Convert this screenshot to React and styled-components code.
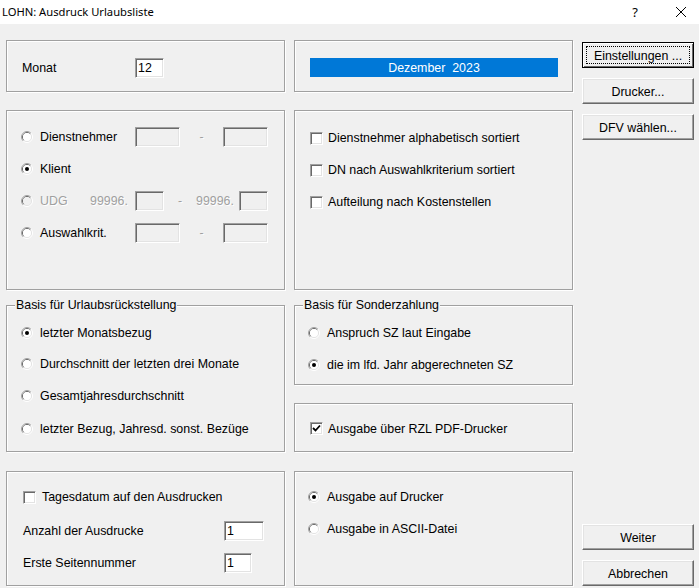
import React from 'react';
import styled, { createGlobalStyle, css } from 'styled-components';

const GlobalStyle = createGlobalStyle`
  html, body {
    margin: 0;
    padding: 0;
    background: #f0f0f0;
  }
  body {
    font-family: 'Liberation Sans', Arial, sans-serif;
    font-size: 12.4px;
    color: #000;
  }
`;

const Window = styled.div`
  width: 699px;
  height: 588px;
  background: #f0f0f0;
  display: flex;
  flex-direction: column;
  overflow: hidden;
`;

const TitleBar = styled.div`
  height: 24px;
  background: #fff;
  display: flex;
  align-items: center;
  padding-left: 2px;
  box-sizing: border-box;
`;

const Title = styled.span`
  flex: 1;
  font-family: 'Noto Sans', 'Open Sans', sans-serif;
  font-size: 11.2px;
  color: #000;
  margin-top: -2px;
`;

const TitleButton = styled.span`
  width: ${p => p.$w}px;
  height: 24px;
  display: flex;
  align-items: center;
  justify-content: center;
  font-family: 'Noto Sans', sans-serif;
  font-size: 13px;
`;

const Body = styled.div`
  flex: 1;
  display: flex;
  padding-left: 6px;
  gap: 9px;
`;

const Columns = styled.div`
  display: flex;
  flex-direction: column;
  width: 567px;
`;

const Row = styled.div`
  display: grid;
  grid-template-columns: 279px 279px;
  column-gap: 9px;
  margin-top: ${p => p.$top}px;
`;

const Stack = styled.div`
  display: flex;
  flex-direction: column;
  gap: 18px;
`;

const etched = css`
  border: 1px solid #a0a0a0;
  box-shadow: inset 1px 1px 0 #fff, 1px 1px 0 #fff;
`;

const Panel = styled.div`
  ${etched};
  box-sizing: border-box;
  height: ${p => p.$h}px;
  padding: ${p => p.$pad || '0 15px'};
  display: flex;
  flex-direction: column;
  justify-content: ${p => (p.$center ? 'center' : 'flex-start')};
`;

const Group = styled.div`
  ${etched};
  box-sizing: border-box;
  height: ${p => p.$h}px;
  position: relative;
  padding: ${p => p.$pad || '10px 15px 0'};
  display: flex;
  flex-direction: column;
`;

const Legend = styled.span`
  position: absolute;
  top: -9px;
  left: ${p => p.$left || 8}px;
  background: #f0f0f0;
  padding: 0 1px;
  line-height: 16px;
`;

const Line = styled.div`
  display: flex;
  align-items: center;
  height: ${p => p.$h || 32}px;
  flex-shrink: 0;
`;

const Label = styled.span`
  display: inline-flex;
  align-items: center;
  width: ${p => (p.$w ? `${p.$w}px` : 'auto')};
  flex-shrink: 0;
  white-space: pre;
  ${p =>
    p.$disabled &&
    css`
      color: #a0a0a0;
      text-shadow: 1px 1px 0 #fff;
    `}
`;

const Dash = styled.span`
  width: ${p => p.$w}px;
  text-align: center;
  color: #a0a0a0;
  text-shadow: 1px 1px 0 #fff;
  flex-shrink: 0;
`;

const Field = styled.span`
  display: inline-flex;
  align-items: center;
  box-sizing: border-box;
  width: ${p => p.$w}px;
  height: 20px;
  padding-left: 2px;
  flex-shrink: 0;
  background: ${p => (p.$disabled ? '#f0f0f0' : '#fff')};
  border-top: 1px solid #a0a0a0;
  border-left: 1px solid #a0a0a0;
  border-right: 1px solid #fff;
  border-bottom: 1px solid #fff;
  box-shadow: inset 1px 1px 0 #696969, inset -1px -1px 0 #e3e3e3;
`;

const Box = styled.span`
  display: inline-flex;
  align-items: center;
  justify-content: center;
  box-sizing: border-box;
  width: 13px;
  height: 13px;
  margin-right: ${p => p.$mr || 5}px;
  background: #fff;
  border-top: 1px solid #a0a0a0;
  border-left: 1px solid #a0a0a0;
  border-right: 1px solid #fff;
  border-bottom: 1px solid #fff;
  box-shadow: inset 1px 1px 0 #696969, inset -1px -1px 0 #e3e3e3;
  flex-shrink: 0;
`;

const RadioIcon = styled.svg`
  width: 12px;
  height: 12px;
  margin-right: 7px;
  flex-shrink: 0;
`;

const BlueBar = styled.div`
  height: 19px;
  background: #0078d7;
  color: #fff;
  display: flex;
  align-items: center;
  justify-content: center;
  white-space: pre;
  margin-right: -1px;
`;

const Buttons = styled.div`
  width: 112px;
  display: flex;
  flex-direction: column;
  padding-top: 18px;
  padding-bottom: 2px;
  gap: 10px;
`;

const Spacer = styled.div`
  flex: 1;
`;

const Button = styled.div`
  height: 26px;
  box-sizing: border-box;
  display: flex;
  align-items: center;
  justify-content: center;
  padding-top: 1px;
  background: #f0f0f0;
  border-top: 1px solid #fff;
  border-left: 1px solid #fff;
  border-right: 1px solid #696969;
  border-bottom: 1px solid #696969;
  box-shadow: inset -1px -1px 0 #a0a0a0, inset 1px 1px 0 #e3e3e3;
  position: relative;
  ${p =>
    p.$focus &&
    css`
      border-color: #000;
      box-shadow: inset 1px 1px 0 #fff, inset -1px -1px 0 #696969;
      &::after {
        content: '';
        position: absolute;
        inset: 3px;
        border: 1px dotted #000;
      }
    `}
`;

const Radio = ({ checked, disabled }) => (
  <RadioIcon viewBox="0 0 12 12">
    <circle cx="6" cy="6" r="5.5" fill="none" stroke="#fff" />
    <path d="M2.1 9.9 A5.5 5.5 0 0 1 9.9 2.1" fill="none" stroke="#a0a0a0" />
    <circle cx="6" cy="6" r="4.5" fill="none" stroke="#e3e3e3" />
    <path d="M2.8 9.2 A4.5 4.5 0 0 1 9.2 2.8" fill="none" stroke="#696969" />
    <circle cx="6" cy="6" r="4" fill={disabled ? '#f0f0f0' : '#fff'} />
    {checked && <circle cx="6" cy="6" r="2" fill="#000" />}
  </RadioIcon>
);

const Check = ({ checked, mr }) => (
  <Box $mr={mr}>
    {checked && (
      <svg width="9" height="9" viewBox="0 0 9 9">
        <polyline points="1,4 3.5,6.5 8,1.5" fill="none" stroke="#000" strokeWidth="1.8" />
      </svg>
    )}
  </Box>
);

const App = () => (
  <Window>
    <GlobalStyle />
    <TitleBar>
      <Title>LOHN: Ausdruck Urlaubsliste</Title>
      <TitleButton $w={56}>?</TitleButton>
      <TitleButton $w={36}>
        <svg width="10" height="10" viewBox="0 0 10 10">
          <path d="M0 0 L10 10 M10 0 L0 10" stroke="#000" strokeWidth="1" />
        </svg>
      </TitleButton>
    </TitleBar>
    <Body>
      <Columns>
        <Row $top={16}>
          <Panel $h={52} $center $pad="3px 15px 0">
            <Line $h={20}>
              <Label $w={113}>Monat</Label>
              <Field $w={29}>12</Field>
            </Line>
          </Panel>
          <Panel $h={52} $center $pad="3px 15px 0">
            <BlueBar>Dezember  2023</BlueBar>
          </Panel>
        </Row>

        <Row $top={18}>
          <Panel $h={180} $pad="10px 15px 0 14px">
            <Line>
              <Label $w={114}><Radio />Dienstnehmer</Label>
              <Field $w={45} $disabled />
              <Dash $w={43}>-</Dash>
              <Field $w={45} $disabled />
            </Line>
            <Line>
              <Label $w={114}><Radio checked />Klient</Label>
            </Line>
            <Line>
              <Label $w={69} $disabled><Radio disabled />UDG</Label>
              <Label $w={45} $disabled>99996.</Label>
              <Field $w={29} $disabled />
              <Dash $w={32}>-</Dash>
              <Label $w={43} $disabled>99996.</Label>
              <Field $w={29} $disabled />
            </Line>
            <Line>
              <Label $w={114}><Radio />Auswahlkrit.</Label>
              <Field $w={45} $disabled />
              <Dash $w={43}>-</Dash>
              <Field $w={45} $disabled />
            </Line>
          </Panel>
          <Panel $h={180} $pad="11px 15px 0 15px">
            <Line>
              <Label><Check />Dienstnehmer alphabetisch sortiert</Label>
            </Line>
            <Line>
              <Label><Check />DN nach Auswahlkriterium sortiert</Label>
            </Line>
            <Line>
              <Label><Check />Aufteilung nach Kostenstellen</Label>
            </Line>
          </Panel>
        </Row>

        <Row $top={15}>
          <Group $h={147} $pad="11px 15px 0 14px">
            <Legend>Basis für Urlaubsrückstellung</Legend>
            <Line $h={31}><Label><Radio checked />letzter Monatsbezug</Label></Line>
            <Line $h={32}><Label><Radio />Durchschnitt der letzten drei Monate</Label></Line>
            <Line $h={32}><Label><Radio />Gesamtjahresdurchschnitt</Label></Line>
            <Line $h={34}><Label><Radio />letzter Bezug, Jahresd. sonst. Bezüge</Label></Line>
          </Group>
          <Stack>
            <Group $h={80} $pad="11px 15px 0 13px">
              <Legend>Basis für Sonderzahlung</Legend>
              <Line><Label><Radio />Anspruch SZ laut Eingabe</Label></Line>
              <Line><Label><Radio checked />die im lfd. Jahr abgerechneten SZ</Label></Line>
            </Group>
            <Panel $h={49} $center $pad="2px 15px 0 15px">
              <Line $h={20}>
                <Label><Check checked />Ausgabe über RZL PDF-Drucker</Label>
              </Line>
            </Panel>
          </Stack>
        </Row>

        <Row $top={19}>
          <Panel $h={115} $pad="9px 15px 0 16px">
            <Line>
              <Label><Check mr={6} />Tagesdatum auf den Ausdrucken</Label>
            </Line>
            <Line $h={36}>
              <Label $w={201}>Anzahl der Ausdrucke</Label>
              <Field $w={40}>1</Field>
            </Line>
            <Line $h={28}>
              <Label $w={201}>Erste Seitennummer</Label>
              <Field $w={28}>1</Field>
            </Line>
          </Panel>
          <Panel $h={115} $pad="9px 15px 0 13px">
            <Line><Label><Radio checked />Ausgabe auf Drucker</Label></Line>
            <Line><Label><Radio />Ausgabe in ASCII-Datei</Label></Line>
          </Panel>
        </Row>
      </Columns>

      <Buttons>
        <Button $focus>Einstellungen ...</Button>
        <Button>Drucker...</Button>
        <Button>DFV wählen...</Button>
        <Spacer />
        <Button>Weiter</Button>
        <Button>Abbrechen</Button>
      </Buttons>
    </Body>
  </Window>
);

export default App;
